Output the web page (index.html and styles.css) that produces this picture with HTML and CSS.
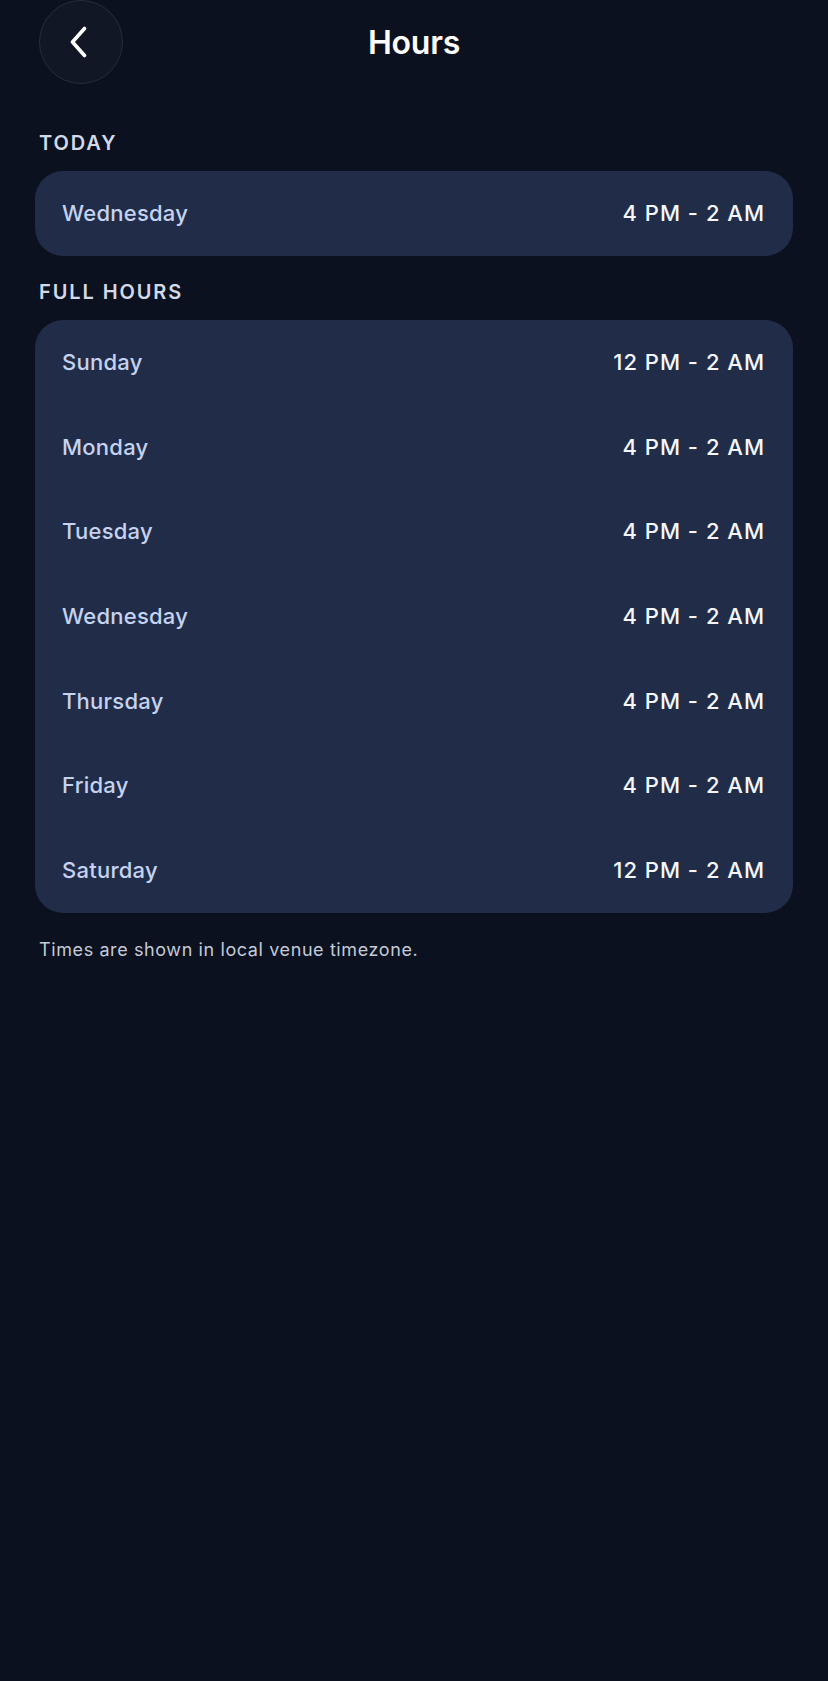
FILE: index.html
```html
<!DOCTYPE html>
<html lang="en">
<head>
    <meta charset="UTF-8">
    <meta name="viewport" content="width=device-width, initial-scale=1.0">
    <title>Hours</title>
    <link rel="stylesheet" href="styles.css">
</head>
<body>

    <div class="page">
        <header class="top-bar">
            <button class="back-btn" aria-label="Back">
                <svg width="20" height="32" viewBox="0 0 20 32">
                    <path d="M15.5 2.5 L3.5 16 L15.5 29.5" fill="none" stroke="#ffffff" stroke-width="3.6" stroke-linecap="round" stroke-linejoin="round"/>
                </svg>
            </button>
            <h1>Hours</h1>
            <span></span>
        </header>

        <p class="section-title">TODAY</p>
        <div class="hours-card">
            <div class="hours-row">
                <span class="day">Wednesday</span>
                <span class="time">4 PM - 2 AM</span>
            </div>
        </div>

        <p class="section-title">FULL HOURS</p>
        <div class="hours-card">
            <div class="hours-row">
                <span class="day">Sunday</span>
                <span class="time">12 PM - 2 AM</span>
            </div>
            <div class="hours-row">
                <span class="day">Monday</span>
                <span class="time">4 PM - 2 AM</span>
            </div>
            <div class="hours-row">
                <span class="day">Tuesday</span>
                <span class="time">4 PM - 2 AM</span>
            </div>
            <div class="hours-row">
                <span class="day">Wednesday</span>
                <span class="time">4 PM - 2 AM</span>
            </div>
            <div class="hours-row">
                <span class="day">Thursday</span>
                <span class="time">4 PM - 2 AM</span>
            </div>
            <div class="hours-row">
                <span class="day">Friday</span>
                <span class="time">4 PM - 2 AM</span>
            </div>
            <div class="hours-row">
                <span class="day">Saturday</span>
                <span class="time">12 PM - 2 AM</span>
            </div>
        </div>

        <footer>Times are shown in local venue timezone.</footer>
    </div>

</body>
</html>
```

FILE: styles.css
```css
body {
    font-family: 'Inter', 'Roboto', sans-serif;
    background: #0b111e;
    color: #f4f6fb;
    margin: 0;
    padding: 0;
    min-height: 100vh;
}

.page {
    padding: 0 35px;
}

.top-bar {
    display: grid;
    grid-template-columns: 1fr auto 1fr;
    align-items: center;
    height: 84px;
}

.back-btn {
    width: 84px;
    height: 84px;
    margin-left: 4px;
    border-radius: 50%;
    background-color: #111724;
    border: 1px solid #262d3c;
    display: flex;
    justify-content: center;
    align-items: center;
    padding: 0 4px 0 0;
    cursor: pointer;
}

h1 {
    margin: 0;
    font-size: 32px;
    font-weight: 600;
    color: #ffffff;
    letter-spacing: -0.2px;
}

.section-title {
    margin: 47px 0 16px 4px;
    font-size: 20px;
    line-height: 24px;
    font-weight: 600;
    letter-spacing: 1.9px;
    color: #d3d9e8;
}

.hours-card + .section-title {
    margin-top: 24px;
}

.hours-card {
    background-color: #212d48;
    border-radius: 28px;
}

.hours-row {
    display: flex;
    justify-content: space-between;
    align-items: center;
    height: 84.7px;
    padding: 0 28px 0 27px;
}

.day {
    font-size: 22px;
    font-weight: 500;
    letter-spacing: 0.25px;
    color: #c5d2f0;
}

.time {
    font-size: 22px;
    font-weight: 500;
    letter-spacing: 1px;
    color: #f4f6fb;
}

footer {
    margin: 26px 0 0 4px;
    font-size: 18px;
    line-height: 22px;
    letter-spacing: 0.6px;
    color: #c4cad8;
}
```
